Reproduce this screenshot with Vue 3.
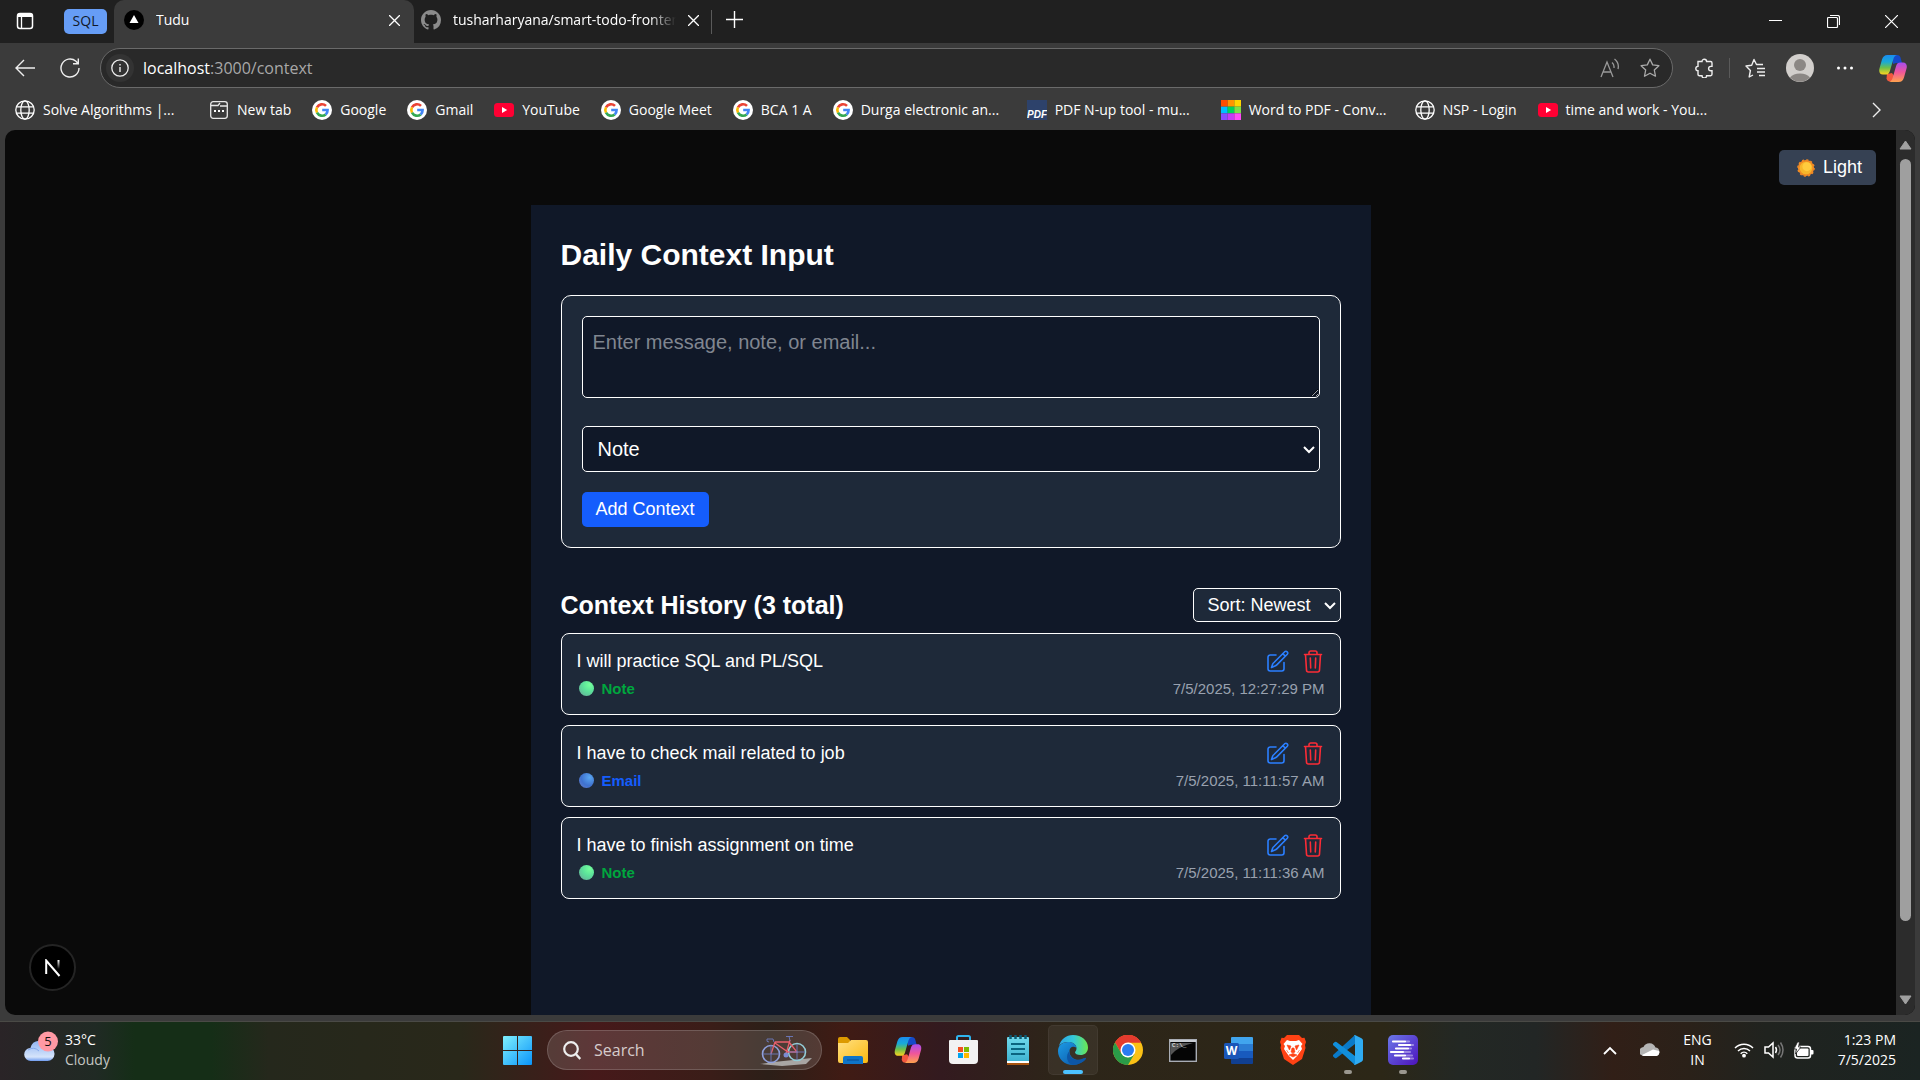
<script setup>
import { ref, computed } from 'vue'

const bookmarks = [
  { label: 'Solve Algorithms |...', icon: 'globe', long: true },
  { label: 'New tab', icon: 'newtab' },
  { label: 'Google', icon: 'google' },
  { label: 'Gmail', icon: 'google' },
  { label: 'YouTube', icon: 'youtube' },
  { label: 'Google Meet', icon: 'google' },
  { label: 'BCA 1 A', icon: 'google' },
  { label: 'Durga electronic an...', icon: 'google', long: true },
  { label: 'PDF N-up tool - mu...', icon: 'pdf', long: true },
  { label: 'Word to PDF - Conv...', icon: 'grid', long: true },
  { label: 'NSP - Login', icon: 'globe' },
  { label: 'time and work - You...', icon: 'youtube', long: true },
]

const gridColors = ['#ff4d00', '#ff9500', '#ffd500', '#00bfff', '#00d45a', '#7be04a', '#8a4bff', '#c63bf5', '#ff4bf8']

const message = ref('')
const kind = ref('Note')
const sort = ref('newest')
const entries = ref([
  { id: 3, text: 'I will practice SQL and PL/SQL', type: 'Note', time: '7/5/2025, 12:27:29 PM' },
  { id: 2, text: 'I have to check mail related to job', type: 'Email', time: '7/5/2025, 11:11:57 AM' },
  { id: 1, text: 'I have to finish assignment on time', type: 'Note', time: '7/5/2025, 11:11:36 AM' },
])
const sorted = computed(() =>
  [...entries.value].sort((a, b) => (sort.value === 'newest' ? b.id - a.id : a.id - b.id)))

function add() {
  if (!message.value.trim()) return
  entries.value.push({
    id: Date.now(),
    text: message.value,
    type: kind.value,
    time: new Date().toLocaleString('en-US'),
  })
  message.value = ''
}
function remove(id) {
  entries.value = entries.value.filter((e) => e.id !== id)
}
</script>

<template>
  <div class="screen">
    <svg class="defs" width="0" height="0" aria-hidden="true">
      <defs>
        <linearGradient id="cpA" x1="0" y1="0" x2="0" y2="1">
          <stop offset="0" stop-color="#1a8cf0" /><stop offset=".35" stop-color="#19a9d8" /><stop offset=".65" stop-color="#6cc04a" /><stop offset="1" stop-color="#ffd21f" />
        </linearGradient>
        <linearGradient id="cpB" x1="0" y1="0" x2="0" y2="1">
          <stop offset="0" stop-color="#a64df0" /><stop offset=".5" stop-color="#f0569a" /><stop offset="1" stop-color="#ffa24d" />
        </linearGradient>
        <linearGradient id="edA" x1="0" y1="0" x2="1" y2="0">
          <stop offset="0" stop-color="#2ba5e8" /><stop offset=".5" stop-color="#34c8d8" /><stop offset="1" stop-color="#6be84f" />
        </linearGradient>
        <linearGradient id="edB" x1="0" y1="0" x2="1" y2="1">
          <stop offset="0" stop-color="#1c9be6" /><stop offset="1" stop-color="#0a4fa0" />
        </linearGradient>
        <linearGradient id="winG" x1="0" y1="0" x2="1" y2="1">
          <stop offset="0" stop-color="#7ff0fd" /><stop offset="1" stop-color="#0a94fa" />
        </linearGradient>
        <linearGradient id="folG" x1="0" y1="0" x2="1" y2="1">
          <stop offset="0" stop-color="#ffe082" /><stop offset="1" stop-color="#fbb90f" />
        </linearGradient>
        <linearGradient id="purG" x1="0" y1="0" x2="1" y2="1">
          <stop offset="0" stop-color="#6a78e8" /><stop offset="1" stop-color="#4c12bc" />
        </linearGradient>
        <linearGradient id="cloudG" x1="0" y1="0" x2="0" y2="1">
          <stop offset="0" stop-color="#8fb4f2" /><stop offset=".8" stop-color="#d5e4fb" /><stop offset="1" stop-color="#6f9cf0" />
        </linearGradient>
        <linearGradient id="nG" x1="0" y1="0" x2="0" y2="1">
          <stop offset="0" stop-color="#fff" /><stop offset="1" stop-color="#fff" stop-opacity="0" />
        </linearGradient>
        <linearGradient id="npG" x1="0" y1="0" x2="0" y2="1">
          <stop offset="0" stop-color="#6fd9ec" /><stop offset="1" stop-color="#3cb1d0" />
        </linearGradient>
        <symbol id="copilot" viewBox="0 0 28 27">
          <path d="M13 0h5c2 0 3 1 3.500 2.500L23 8h-6l-3 1z" fill="#1549c8" />
          <path d="M8 19l5-1 6 8.500h-8c-2 0-3-1-3.500-3z" fill="#f2583e" />
          <path d="M8.500 0H18c-2 .4-3 2-3.600 4l-3.500 12c-.7 2.500-2 3.600-4.400 3.600H4C.7 19.600-.3 17 .4 13.700L3 4.500C4 1.500 5.500 0 8.500 0z" fill="url(#cpA)" />
          <path d="M19.500 27H10c2-.4 3-2 3.600-4l3.500-12c.7-2.500 2-3.600 4.400-3.600H24c3.300 0 4.300 2.600 3.600 5.900L25 22.500c-1 3-2.500 4.500-5.500 4.500z" fill="url(#cpB)" />
        </symbol>
        <symbol id="i-globe" viewBox="0 0 20 20">
          <g fill="none" stroke="#fff" stroke-width="1.300"><circle cx="10" cy="10" r="9.200" /><ellipse cx="10" cy="10" rx="4.200" ry="9.200" /><path d="M1.500 6.800h17M1.500 13.200h17" /></g>
        </symbol>
        <symbol id="i-newtab" viewBox="0 0 20 20">
          <g fill="none" stroke="#e8e8e8" stroke-width="1.300"><rect x="1.700" y="1.700" width="16.600" height="16.600" rx="2.500" /><path d="M2 5.500h7l2-2.500M11 6h7" /></g>
          <path d="M5 10h2v2H5zM9 10h2v2H9zM13 10h2v2h-2z" fill="#fff" />
        </symbol>
        <symbol id="i-google" viewBox="0 0 20 20">
          <circle cx="10" cy="10" r="10" fill="#fff" />
          <g fill="none" stroke-width="2.600"><path d="M14 5.900A5.700 5.700 0 0 0 5 7.300" stroke="#ea4335" /><path d="M5 7.300a5.700 5.700 0 0 0 0 5.400" stroke="#fbbc05" /><path d="M5 12.700a5.700 5.700 0 0 0 8.700 1.700" stroke="#34a853" /><path d="M13.700 14.400A5.500 5.500 0 0 0 15.600 10H10.200" stroke="#4285f4" /></g>
        </symbol>
        <symbol id="i-youtube" viewBox="0 0 20 20">
          <rect y="3" width="20" height="14" rx="3.500" fill="#ff0033" /><path d="M8 7l5.200 3L8 13z" fill="#fff" />
        </symbol>
        <symbol id="sun" viewBox="0 0 20 20">
          <circle cx="10" cy="10" r="8" fill="#f7b62a" stroke="#f08a24" stroke-width="2" /><circle cx="10" cy="10" r="9" fill="none" stroke="#f08a24" stroke-width="1.600" stroke-dasharray="2.300 2.412" /><circle cx="11" cy="8.500" r="5" fill="#ffcb3d" />
        </symbol>
      </defs>
    </svg>

    <header class="browser">
      <div class="tabs">
        <button class="icon workspace" aria-label="Tab actions">
          <svg width="18" height="18" viewBox="0 0 18 18"><rect x="1.500" y="1.500" width="15" height="15" rx="2.500" fill="none" stroke="#fff" stroke-width="1.500" /><path d="M1.500 3.500a2 2 0 0 1 2-2h11a2 2 0 0 1 2 2V5h-15z" fill="#fff" /><path d="M5.500 5v11.500" stroke="#fff" stroke-width="1.300" /></svg>
        </button>
        <button class="group">SQL</button>
        <div class="tab active">
          <svg width="20" height="20" viewBox="0 0 20 20"><circle cx="10" cy="10" r="10" /><path d="M10 5l4.500 8h-9z" fill="#fff" /></svg>
          <span class="title">Tudu</span>
          <button class="icon" aria-label="Close tab"><svg width="11" height="11" viewBox="0 0 11 11"><path d="M0 0l11 11M11 0L0 11" stroke="#fff" stroke-width="1.300" /></svg></button>
        </div>
        <div class="tab second">
          <svg width="20" height="20" viewBox="0 0 16 16"><path fill="#8b8b8b" d="M8 0C3.580 0 0 3.580 0 8c0 3.540 2.290 6.530 5.470 7.590.4.070.55-.17.55-.38 0-.19-.01-.82-.01-1.490-2.010.37-2.530-.49-2.690-.94-.09-.23-.48-.94-.82-1.130-.28-.15-.68-.52-.01-.53.63-.01 1.080.58 1.230.82.72 1.210 1.870.87 2.330.66.07-.52.28-.87.51-1.070-1.780-.2-3.640-.89-3.640-3.950 0-.87.31-1.590.82-2.150-.08-.2-.36-1.020.08-2.120 0 0 .67-.21 2.200.82.64-.18 1.320-.27 2-.27s1.360.09 2 .27c1.530-1.040 2.200-.82 2.200-.82.44 1.100.16 1.920.08 2.120.51.56.82 1.270.82 2.150 0 3.070-1.870 3.750-3.650 3.950.29.25.54.73.54 1.480 0 1.070-.01 1.930-.01 2.200 0 .21.15.46.55.38A8.010 8.010 0 0 0 16 8c0-4.420-3.580-8-8-8z" /></svg>
          <span class="title fade">tusharharyana/smart-todo-frontend</span>
          <button class="icon" aria-label="Close tab"><svg width="11" height="11" viewBox="0 0 11 11"><path d="M0 0l11 11M11 0L0 11" stroke="#fff" stroke-width="1.300" /></svg></button>
        </div>
        <i class="rule"></i>
        <button class="icon plus" aria-label="New tab"><svg width="17" height="17" viewBox="0 0 17 17"><path d="M8.500 0v17M0 8.500h17" stroke="#fff" stroke-width="1.400" /></svg></button>
        <div class="controls">
          <button class="icon" aria-label="Minimize"><svg width="13" height="13" viewBox="0 0 13 13"><path d="M0 5.500h13" stroke="#fff" /></svg></button>
          <button class="icon" aria-label="Restore"><svg width="13" height="13" viewBox="0 0 13 13"><path d="M.5 3.500a1 1 0 0 1 1-1h8a1 1 0 0 1 1 1v8a1 1 0 0 1-1 1h-8a1 1 0 0 1-1-1zM3 .5h7.500a2 2 0 0 1 2 2V10" fill="none" stroke="#fff" stroke-width="1.200" /></svg></button>
          <button class="icon" aria-label="Close"><svg width="13" height="13" viewBox="0 0 13 13"><path d="M0 0l13 13M13 0L0 13" stroke="#fff" stroke-width="1.200" /></svg></button>
        </div>
      </div>

      <div class="toolbar">
        <button class="icon" aria-label="Back"><svg width="20" height="20" viewBox="0 0 20 20"><path d="M20 10H1M9 2L1 10l8 8" fill="none" stroke="#eee" stroke-width="1.400" /></svg></button>
        <button class="icon reload" aria-label="Refresh"><svg width="20" height="20" viewBox="0 0 20 20"><path d="M19 10a9 9 0 1 1-3-6.700L18 5.500M18.300.500v5.300h-5.300" fill="none" stroke="#eee" stroke-width="1.400" /></svg></button>
        <div class="address">
          <span class="site"><svg width="18" height="18" viewBox="0 0 18 18"><circle cx="9" cy="9" r="8.200" fill="none" stroke="#eee" stroke-width="1.300" /><path d="M9 8v5M9 5v1.500" stroke="#eee" stroke-width="1.400" /></svg></span>
          <a class="url" href="#context"><b>localhost</b>:3000/context</a>
          <svg width="20" height="20" viewBox="0 0 20 20"><path d="M1 19L7 4l6 15M3 14h8M12 4.500q2.500 2 2 5.500M14.500 1q5 4 3.500 10" fill="none" stroke="#999" stroke-width="1.300" /></svg>
          <svg width="20" height="20" viewBox="0 0 20 20"><path d="M10 1.200l2.700 5.700 6.200.8-4.600 4.300 1.200 6.200L10 15.200l-5.500 3 1.200-6.200L1.100 7.700l6.200-.8z" fill="none" stroke="#aaa" stroke-width="1.300" stroke-linejoin="round" /></svg>
        </div>
        <div class="tools">
          <svg width="20" height="20" viewBox="0 0 20 20"><path d="M4 3.500h4a2.300 2.300 0 0 1 4.600 0h4q1.400 0 1.400 1.400v3.500h-1.200a2.200 2.200 0 0 0 0 4.400H18v3.500q0 1.400-1.400 1.400h-4a2.300 2.300 0 0 1-4.600 0H5.400Q4 17.700 4 16.300v-3.500a2.200 2.200 0 0 1 0-4.400z" fill="none" stroke="#eee" stroke-width="1.400" /></svg>
          <i class="rule"></i>
          <svg width="20" height="20" viewBox="0 0 20 20"><path d="M8 17l-3.800 2 1.200-6.500L1 8l5.700-.8L9 1.500l2.500 5h6.500M12 10.500h8M12 14h8M14 17.500h6" fill="none" stroke="#eee" stroke-width="1.400" stroke-linejoin="round" /></svg>
          <svg class="avatar" width="28" height="28" viewBox="0 0 28 28"><circle cx="14" cy="14" r="14" fill="#d2cfcc" /><circle cx="14" cy="11" r="6" fill="#8b8784" /><path d="M4 23.500a11.500 8 0 0 1 20 0 14 14 0 0 1-20 0z" fill="#8b8784" /></svg>
          <svg width="18" height="18" viewBox="0 0 18 18"><g fill="#fff"><circle cx="2.500" cy="9" r="1.500" /><circle cx="9" cy="9" r="1.500" /><circle cx="15.500" cy="9" r="1.500" /></g></svg>
          <svg class="cop" width="28" height="27"><use href="#copilot" /></svg>
        </div>
      </div>

      <nav class="bookmarks" aria-label="Bookmarks">
        <a v-for="b in bookmarks" :key="b.label" href="#bookmark" :class="{ long: b.long }">
          <svg v-if="b.icon === 'grid'" width="20" height="20" viewBox="0 0 3 3"><rect v-for="(c, i) in gridColors" :key="c" :x="i % 3" :y="Math.floor(i / 3)" width="1" height="1" :fill="c" /></svg>
          <svg v-else-if="b.icon === 'pdf'" width="20" height="20" viewBox="0 0 20 20"><rect width="20" height="20" fill="#2d426b" /><text x="0" y="18" class="pdf">PDF</text></svg>
          <svg v-else width="20" height="20"><use :href="'#i-' + b.icon" /></svg>
          <span>{{ b.label }}</span>
        </a>
        <button class="icon more" aria-label="More bookmarks"><svg width="9" height="16" viewBox="0 0 9 16"><path d="M1 1l7 7-7 7" fill="none" stroke="#eee" stroke-width="1.400" /></svg></button>
      </nav>
    </header>

    <div class="viewport">
      <div class="page">
        <button class="theme"><svg width="18" height="18"><use href="#sun" /></svg>Light</button>

        <main class="panel">
          <h1>Daily Context Input</h1>
          <form class="card form" @submit.prevent="add">
            <textarea v-model="message" aria-label="Context" placeholder="Enter message, note, or email..."></textarea>
            <span class="select">
              <select v-model="kind" aria-label="Type"><option>Note</option><option>Email</option><option>Message</option></select>
              <svg width="12" height="8" viewBox="0 0 12 8"><path d="M1 1l5 5 5-5" fill="none" stroke="#fff" stroke-width="2" /></svg>
            </span>
            <button class="primary">Add Context</button>
          </form>

          <div class="head">
            <h2>Context History ({{ entries.length }} total)</h2>
            <span class="select sort">
              <select v-model="sort" aria-label="Sort"><option value="newest">Sort: Newest</option><option value="oldest">Sort: Oldest</option></select>
              <svg width="12" height="8" viewBox="0 0 12 8"><path d="M1 1l5 5 5-5" fill="none" stroke="#fff" stroke-width="2" /></svg>
            </span>
          </div>

          <ul class="list">
            <li v-for="e in sorted" :key="e.id" class="card entry">
              <div class="line">
                <p>{{ e.text }}</p>
                <button class="icon edit" aria-label="Edit"><svg width="22" height="22" viewBox="0 0 22 22"><g fill="none" stroke="currentColor" stroke-width="1.600" stroke-linecap="round" stroke-linejoin="round"><path d="M9 5H3.200A2.200 2.200 0 0 0 1 7.200v11.600A2.200 2.200 0 0 0 3.200 21h11.600a2.200 2.200 0 0 0 2.200-2.200V12.500" /><path d="M7.200 12.300L17.700 1.700a1.850 1.850 0 0 1 2.600 2.600L9.800 14.900q-.8.800-1.900 1.200L4.500 17.500l1.200-3.500q.4-1 1.500-1.700zM15.800 3.600L18.400 6.200" /></g></svg></button>
                <button class="icon trash" aria-label="Delete" @click="remove(e.id)"><svg width="20" height="23" viewBox="0 0 20 23"><g fill="none" stroke="currentColor" stroke-width="1.600" stroke-linecap="round" stroke-linejoin="round"><path d="M1.500 4.500h17M6 4.500V2.700A1.700 1.700 0 0 1 7.700 1h4.600A1.700 1.700 0 0 1 14 2.700v1.800M2.500 4.500l1 15.500a2 2 0 0 0 2 2h9a2 2 0 0 0 2-2l1-15.500M7.300 8l.4 10M12.700 8l-.4 10" /></g></svg></button>
              </div>
              <div class="line meta">
                <strong :class="e.type.toLowerCase()"><i></i>{{ e.type }}</strong>
                <time>{{ e.time }}</time>
              </div>
            </li>
          </ul>
        </main>

        <button class="dev" aria-label="Developer tools">
          <svg width="16" height="18" viewBox="0 0 16 18"><path d="M1.200 15V1.500L14.500 17" fill="none" stroke="#fff" stroke-width="2" /><path d="M12.500 1h2v9h-2z" fill="url(#nG)" /></svg>
        </button>
      </div>
      <div class="scroll" aria-hidden="true">
        <svg width="13" height="10" viewBox="0 0 13 10"><path d="M6.500 1L12 9H1z" fill="#a0a0a0" stroke="#a0a0a0" stroke-linejoin="round" /></svg>
        <i></i>
        <svg width="13" height="10" viewBox="0 0 13 10"><path d="M6.500 9L12 1H1z" fill="#a0a0a0" stroke="#a0a0a0" stroke-linejoin="round" /></svg>
      </div>
    </div>

    <footer class="taskbar">
      <div class="weather">
        <svg width="34" height="32" viewBox="0 0 34 32"><path d="M7 30a6.500 6.500 0 0 1-.6-13 9.500 9.500 0 0 1 18-1.500A7.300 7.300 0 0 1 23.500 30z" fill="url(#cloudG)" /><path d="M4 19q6-4 11 1" fill="none" stroke="#84a9ec" /><circle cx="24" cy="10.500" r="10" fill="#ff99a4" /><text x="24" y="15" class="count">5</text></svg>
        <p>33°C<br><span>Cloudy</span></p>
      </div>

      <div class="apps">
        <button aria-label="Start"><svg width="29" height="29" viewBox="0 0 29 29"><path d="M0 1q0-1 1-1h13v14H0zM15 0h13q1 0 1 1v13H15zM0 15h14v14H1q-1 0-1-1zM15 15h14v13q0 1-1 1H15z" fill="url(#winG)" /></svg></button>
        <label class="search">
          <svg width="18" height="19" viewBox="0 0 18 19"><circle cx="8" cy="8" r="6.800" fill="none" stroke="#eee" stroke-width="2.200" /><path d="M12.800 13l4.500 5" stroke="#eee" stroke-width="2.400" /></svg>
          <input type="text" placeholder="Search" aria-label="Search">
          <svg width="54" height="32" viewBox="0 0 54 32"><path d="M0 30l14-2 38-4-6 6-24 2z" fill="#a9a6a4" /><g fill="none" stroke-width="1.300"><circle cx="11" cy="20" r="8.500" stroke="#8fa0dc" stroke-width="1.600" /><circle cx="37" cy="18" r="8.500" stroke="#93ccd6" stroke-width="1.600" /><path d="M11 20l4-12M15 8h14l8 10H28L15 9M26 20l4-14" stroke="#e8606c" /><path d="M14 8l-1-3H7q-1 3 2 3M30 7l-1-5M26 2.500h7M11 11v17M3 20h16M37 10v16M29 18h16" stroke="#6d7bc0" stroke-width=".9" /></g><circle cx="26" cy="21" r="2.500" fill="#7c8cd0" /></svg>
        </label>
        <button aria-label="File Explorer"><svg width="30" height="27" viewBox="0 0 30 27"><path d="M0 2q0-2 2-2h7l3 3h0v4H0z" fill="#dc9a00" /><path d="M0 6h10l3-3h15q2 0 2 2v19q0 2-2 2H2q-2 0-2-2z" fill="url(#folG)" /><path d="M5 27v-6q0-2 2-2h16q2 0 2 2v6z" fill="#0f74c8" /><path d="M9 23h12" stroke="#0a4a90" /></svg></button>
        <button aria-label="Copilot"><svg width="28" height="26"><use href="#copilot" /></svg></button>
        <button aria-label="Store"><svg width="29" height="30" viewBox="0 0 29 30"><path d="M8 6V2.500Q8 1 9.500 1h10Q21 1 21 2.500V6" fill="none" stroke="#2fb4ee" stroke-width="2" /><path d="M0 5.500Q0 5 1 5h27q1 0 1 1v19q0 4-4 4H4q-4 0-4-4z" fill="#f2f2f2" /><path d="M9 12h5v5H9z" fill="#f25022" /><path d="M15 12h5v5h-5z" fill="#7fba00" /><path d="M9 18h5v5H9z" fill="#00a4ef" /><path d="M15 18h5v5h-5z" fill="#ffb900" /></svg></button>
        <button aria-label="Notepad"><svg width="22" height="30" viewBox="0 0 22 30"><rect y="2" width="22" height="26" rx="1" fill="url(#npG)" /><path d="M0 26h22v2H0z" fill="#fff" /><path d="M0 28h22v2H0z" fill="#a8540f" /><path d="M3.500 0v4M8.500 0v4M13.500 0v4M18.500 0v4" stroke="#0c5b74" stroke-width="2.500" /><path d="M4 9h14M4 14h14M4 19h14" stroke="#0b6480" stroke-width="2" /></svg></button>
        <button class="current" aria-label="Edge"><svg width="30" height="30" viewBox="0 0 30 30"><path d="M1 11C3 4 8 0 15 0c9 0 15 6 15 12.500 0 5-3.500 7.500-7.500 7.500-3.500 0-5.500-1.500-5.500-2.500s1.500-1.500 1.500-4C18.500 9 14 7 10 7s-7 1.500-9 4z" fill="url(#edA)" /><path d="M0 16C0 10 5 7 10 7s8.500 2.500 8.500 6.500c0-2-7-3.500-7 3 0 6 6 9.500 11.500 8 3-.7 5-2.500 5-1C26 27 20 30 15 30 6.500 30 0 24 0 16z" fill="url(#edB)" /><path d="M11.500 16c-1 6 5 10.500 11.500 8.500 3-1 5-2.500 5-1C26 27 20 30 15 30 9 29 7 20 11.500 16z" fill="#0d56a6" /></svg></button>
        <button aria-label="Chrome"><svg width="30" height="30" viewBox="0 0 30 30"><circle cx="15" cy="15" r="15" fill="#fbc116" /><path d="M15 15L2 7.500A15 15 0 0 1 28 7.500H15z" fill="#e33b2e" /><path d="M15 7.500h13A15 15 0 0 0 2 7.500l6.500 11.300z" fill="#e33b2e" /><path d="M2 7.500A15 15 0 0 0 15 30l6.500-11.300L15 22.500l-6.500-3.700z" fill="#2a9b48" /><circle cx="15" cy="15" r="7.500" fill="#fff" /><circle cx="15" cy="15" r="6" fill="#2a7cf0" /></svg></button>
        <button aria-label="Command Prompt"><svg width="28" height="23" viewBox="0 0 28 23"><rect x=".7" y=".7" width="26.600" height="21.600" fill="#050505" stroke="#a9adb5" stroke-width="1.400" /><path d="M1 1h26v2H1z" fill="#c8ccd2" /><path d="M2 4h22Q8 8 2 16z" fill="#555" /><text x="3" y="8" class="cmd">C:\_</text></svg></button>
        <button aria-label="Word"><svg width="29" height="27" viewBox="0 0 29 27"><path d="M7 1q0-1 1-1h20q1 0 1 1v6H7z" fill="#41a5ee" /><path d="M7 7h22v7H7z" fill="#2b7cd3" /><path d="M7 14h22v7H7z" fill="#185abd" /><path d="M7 21h22v5q0 1-1 1H8q-1 0-1-1z" fill="#103f91" /><rect y="6" width="15" height="16" rx="1.500" fill="#1a56b8" /><text x="7.500" y="18" class="word">W</text></svg></button>
        <button aria-label="Brave"><svg width="26" height="30" viewBox="0 0 26 30"><path d="M7 0h12l3 3 2.500-.3L26 7l-1 3 .5 3-3.500 11-9 6-9-6L.5 13 1 10 0 7l1.500-4.300L4 3z" fill="#ff4214" /><path d="M7 5l3 1h6l3-1 3.500 4-1.500 2 1 3-3.500 5-1.500 2-4 4-4-4-1.500-2L4 14l1-3-1.500-2z" fill="#fff" /><path d="M7 10l4 1-1.500 4zM19 10l-4 1 1.500 4zM11 17l2 1 2-1-1-4h-2zM9 20l4-1.500 4 1.500-4 2zM6.500 15l2 3M19.500 15l-2 3" fill="#ff4214" stroke="#ff4214" stroke-width=".6" /></svg></button>
        <button class="open" aria-label="Visual Studio Code"><svg width="30" height="30" viewBox="0 0 30 30"><path d="M22 0L0 20q-.5 1 .2 1.600l1.600 1.400q.8.500 1.700 0L22 9z" fill="#0a7ac8" /><path d="M22 30L0 10q-.5-1 .2-1.600L1.800 7q.8-.5 1.700 0L22 21z" fill="#118fdc" /><path d="M21 0q.8-.2 1.500.2l6 3Q30 4 30 5.500v19q0 1.500-1.500 2.300l-6 3q-.8.400-1.500.2l1-1.500v-27z" fill="#2fabf2" /></svg></button>
        <button class="open" aria-label="Notes"><svg width="30" height="30" viewBox="0 0 30 30"><rect width="30" height="30" rx="5" fill="url(#purG)" /><g stroke="#fff" stroke-width="2.200" stroke-linecap="round"><path d="M5 6.500h12M11 10h11M3 17h12M7 20.500h10M15 23.500h6M8 13.500h12" /><path d="M18 6.500h3M23 10h2M16 17h6M18 20.500h6M22 23.500h3M21 13.500h2" opacity=".4" /></g></svg></button>
      </div>

      <div class="tray">
        <svg width="14" height="9" viewBox="0 0 14 9"><path d="M1 8l6-6 6 6" fill="none" stroke="#fff" stroke-width="1.800" /></svg>
        <svg class="drive" width="20" height="14" viewBox="0 0 20 14"><path d="M4 13A4.500 4.500 0 0 1 3.500 4 6.500 6.500 0 0 1 15.500 4.500 4.500 4.500 0 0 1 17 13z" fill="#b5b5b5" /><path d="M2 12l11-5.500 6 1.500a4 4 0 0 1-2.500 5H4q-1.500 0-2-1z" fill="#fff" /></svg>
        <p class="lang">ENG<br>IN</p>
        <svg width="20" height="16" viewBox="0 0 20 16"><g fill="none" stroke="#fff" stroke-width="1.500"><path d="M1 6a12.500 12.500 0 0 1 18 0M4 9a8.500 8.500 0 0 1 12 0M6.700 11.700a4.700 4.700 0 0 1 6.600 0" /></g><circle cx="10" cy="13.700" r="1.900" fill="#fff" /></svg>
        <svg width="20" height="18" viewBox="0 0 20 18"><g fill="none" stroke="#fff" stroke-width="1.500"><path d="M1 6h3.500L9 2v14l-4.500-4H1zM11.500 6q2 3 0 6" /><path d="M14 4q4 5 0 10M16.500 1.500q5 7.500 0 15" stroke="#777" /></g></svg>
        <svg width="20" height="17" viewBox="0 0 20 17"><rect x="1" y="4.500" width="15.500" height="11.500" rx="2.500" fill="none" stroke="#fff" stroke-width="1.500" /><rect x="3" y="6.500" width="11.500" height="7.500" rx="1" fill="#fff" /><path d="M17 8h1.500q1 0 1 1v2.500q0 1-1 1H17z" fill="#fff" /><path d="M3.500 0L0 7h2.500L1.500 12 7 5H4.500L5.500 0z" fill="#fff" stroke="#222" stroke-width=".8" /></svg>
        <p class="clock">1:23 PM<br>7/5/2025</p>
      </div>
    </footer>
  </div>
</template>

<style>
body { background: #3b3b3b; }
</style>

<style scoped>
* { box-sizing: border-box; margin: 0; padding: 0; }
.screen {
  display: flex;
  flex-direction: column;
  min-height: 100vh;
  color: #fff;
  background: #3b3b3b;
  font-family: "Open Sans", "Noto Sans", sans-serif;
  font-size: 14px;
}
.defs { position: absolute; }
svg { flex: none; display: block; }
button { font: inherit; color: inherit; border: 0; background: none; }
.icon { display: grid; place-items: center; }
a { color: inherit; text-decoration: none; }
.rule { width: 1px; background: #5a5a5a; }

.tabs { display: flex; align-items: center; height: 43px; background: #202020; padding-left: 16px; }
.workspace { padding-bottom: 2px; }
.group { width: 43px; height: 25px; margin: 0 7px 0 30px; padding-bottom: 2px; border-radius: 5px; background: #669df6; color: #101828; }
.tab { display: flex; align-items: center; gap: 12px; height: 43px; padding-bottom: 3px; }
.active { width: 300px; padding-left: 10px; padding-right: 14px; background: #3b3b3b; border-radius: 10px 10px 0 0; }
.second { width: 292px; padding-left: 7px; padding-right: 7px; }
.title { flex: 1; padding-bottom: 2px; overflow: hidden; white-space: nowrap; }
.fade { mask-image: linear-gradient(90deg, #000 88%, transparent); }
.tabs > .rule { height: 24px; margin: 0 14px 0 5px; }
.plus { padding-bottom: 4px; }
.controls { display: flex; gap: 45px; margin-left: auto; padding-right: 22px; }

.toolbar { display: flex; align-items: center; height: 50px; padding: 0 13px 0 15px; }
.reload { margin: 0 20px 0 25px; }
.address {
  flex: 1; display: flex; align-items: center; gap: 20px; height: 40px; padding: 0 12px 0 5px;
  border: 1px solid #6a6a6a; border-radius: 20px; background: #292929;
}
.site { display: grid; place-items: center; width: 28px; height: 28px; border-radius: 14px; background: #333; }
.url { flex: 1; margin-left: -11px; font-size: 16px; color: #a8a8a8; }
.url b { font-weight: 400; color: #fff; }
.tools { display: flex; align-items: center; padding-left: 21px; }
.tools > .rule { height: 20px; margin: 0 15px; }
.avatar { margin: 0 22px 0 21px; }
.cop { margin-left: 25px; }

.bookmarks { display: flex; align-items: center; height: 37px; padding: 0 39px 3px 15px; }
.bookmarks a { display: flex; align-items: center; gap: 8px; padding-right: 21px; white-space: nowrap; }
.bookmarks .long { width: 194px; padding-right: 0; }
.bookmarks span { padding-bottom: 2px; }
.more { margin-left: auto; }
.pdf { font: italic 700 10px "Liberation Sans", sans-serif; fill: #fff; }

.viewport { flex: 1; display: flex; margin: 0 5px 6px; border-radius: 10px; overflow: hidden; background: #0a0a0a; }
.page { position: relative; flex: 1; display: flex; justify-content: center; padding-top: 75px; font-family: "Liberation Sans", Arial, sans-serif; font-size: 18px; }
.scroll { display: flex; flex-direction: column; align-items: center; gap: 9px; width: 19px; padding: 10px 0; background: #2c2c2c; }
.scroll i { width: 11px; flex: 1; margin-bottom: 65px; border-radius: 6px; background: #9f9f9f; }
.theme {
  position: absolute; top: 20px; right: 20px; display: flex; align-items: center; gap: 8px;
  height: 35px; padding: 0 14px 0 18px; border-radius: 5px; background: #364153;
}
.dev {
  position: absolute; left: 24px; bottom: 24px; display: grid; place-items: center; width: 47px; height: 47px;
  border: 2px solid #242424; border-radius: 50%; background: #000;
}

.panel { width: 100%; max-width: 840px; padding: 30px; background: #101828; }
h1 { font-size: 30px; line-height: 40px; margin-bottom: 20px; }
.card { border: 1px solid #fff; background: #1e2939; }
.form { display: flex; flex-direction: column; align-items: flex-start; padding: 20px; border-radius: 10px; }
textarea {
  width: 100%; height: 82px; padding: 10px; margin-bottom: 28px; resize: vertical;
  font: inherit; font-size: 20px; line-height: 30px; color: #fff;
  border: 1px solid #fff; border-radius: 5px; background: #101828;
}
textarea::placeholder { color: #808690; }
.select { position: relative; display: block; width: 100%; margin-bottom: 20px; }
.select svg { position: absolute; right: 5px; top: 50%; margin-top: -3px; pointer-events: none; }
select {
  appearance: none; width: 100%; height: 46px; padding: 0 15px; font: inherit; font-size: 20px;
  color: #fff; border: 1px solid #fff; border-radius: 5px; background: #101828;
}
.primary { height: 35px; padding: 0 14px; border-radius: 5px; background: #155dfc; }
.head { display: flex; align-items: center; justify-content: space-between; margin: 40px 0 11px; }
h2 { font-size: 25px; line-height: 34px; }
.sort { width: 148px; margin: 0; }
.sort select { height: 34px; font-size: 18px; padding: 0 14px; background: #1e2939; }
.list { display: grid; gap: 10px; list-style: none; }
.entry { height: 82px; padding: 15px; border-radius: 8px; }
.line { display: flex; align-items: center; height: 24px; }
.line p { flex: 1; }
.edit { color: #2b7fff; }
.trash { color: #fb2c36; margin: 0 2px 0 14px; }
.meta { justify-content: space-between; height: 30px; font-size: 15px; }
.meta time { color: #99a1af; }
.meta strong { display: flex; align-items: center; gap: 8px; padding-left: 2px; color: #00a63e; }
.meta i { width: 15px; height: 15px; border-radius: 50%; background: radial-gradient(circle at 70% 25%, #74ff9c, #5be09a 45%, #6aa59a); }
.meta .email { color: #155dfc; }
.meta .email i { background: radial-gradient(circle at 70% 30%, #5aa6f0, #3f72cf 55%, #6a7cc4); }

.taskbar {
  display: grid; grid-template-columns: 1fr auto 1fr; align-items: center; height: 59px; padding: 0 24px 2px;
  border-top: 1px solid #4a4a46;
  background: linear-gradient(90deg, #2a2427 0, #202a24 5%, #152e17 7%, #152e17 11%, #25281c 14%, #29281a 24%, #46191a 31%, #3a1d18 37%, #2c1f18 40%, #401b14 44%, #331a1f 49%, #2d2519 55%, #2c2717 72%, #232824 76%, #222625 80%, #311f17 84%, #2a2119 88%, #20231f 92%, #1b2422 100%);
}
.weather { display: flex; align-items: center; gap: 7px; }
.weather p, .tray p { font-size: 14px; line-height: 20px; }
.weather svg { margin-bottom: 6px; }
.weather span { color: #c4c6c2; }
.count { font-size: 13px; text-anchor: middle; fill: #111; }
.apps { display: flex; align-items: center; gap: 5px; }
.apps button { position: relative; display: grid; place-items: center; width: 50px; height: 50px; border-radius: 5px; }
.apps .current { background: #ffffff0f; box-shadow: inset 0 0 0 1px #ffffff0c; }
.apps .current::after, .apps .open::after {
  content: ""; position: absolute; bottom: 1px; left: 50%; width: 8px; height: 4px; margin-left: -4px;
  border-radius: 2px; background: #9a978f;
}
.apps .current::after { width: 20px; margin-left: -10px; background: #4cc2ff; }
.search {
  display: flex; align-items: center; gap: 13px; width: 275px; height: 40px; margin-right: 1px; padding: 0 7px 0 15px;
  border: 1px solid #ffffff2a; border-radius: 20px; background: #ffffff22;
}
.search input { flex: 1; min-width: 0; border: 0; outline: 0; background: none; font: inherit; font-size: 16px; color: #fff; }
.search input::placeholder { color: #d6cccc; }
.cmd { font: 6px "Liberation Mono", monospace; fill: #fff; }
.word { font: 700 12px "Open Sans", sans-serif; text-anchor: middle; fill: #fff; }
.tray { display: flex; align-items: center; justify-content: flex-end; gap: 10px; }
.drive { margin: 0 13px; }
.tray .lang { text-align: center; margin-right: 12px; }
.tray .clock { text-align: right; margin-left: 14px; }
</style>
